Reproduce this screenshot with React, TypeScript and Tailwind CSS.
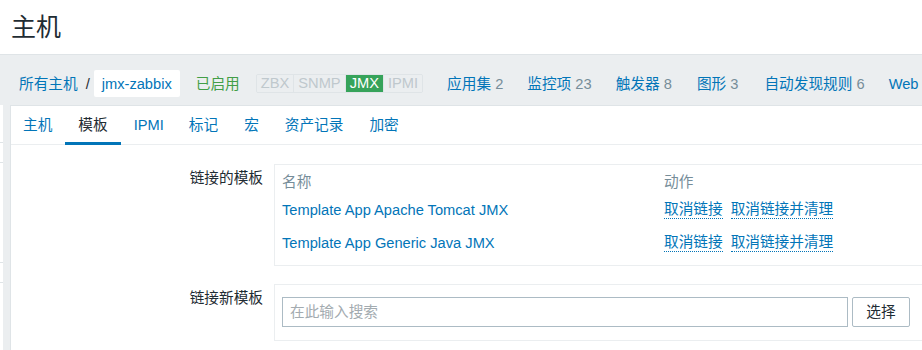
const font = { fontFamily: '"Liberation Sans", "Noto Sans CJK SC", sans-serif' };

const navLinks = [
  { label: "应用集", count: 2, ml: "ml-0" },
  { label: "监控项", count: 23, ml: "ml-[24px]" },
  { label: "触发器", count: 8, ml: "ml-[24px]" },
  { label: "图形", count: 3, ml: "ml-[25px]" },
  { label: "自动发现规则", count: 6, ml: "ml-[26px]" },
  { label: "Web 场景", count: 1, ml: "ml-[24px]" },
];

const tabs = ["主机", "模板", "IPMI", "标记", "宏", "资产记录", "加密"];

const linked = ["Template App Apache Tomcat JMX", "Template App Generic Java JMX"];

function Badges() {
  const items = [
    { name: "ZBX", on: false },
    { name: "SNMP", on: false },
    { name: "JMX", on: true },
    { name: "IPMI", on: false },
  ];
  return (
    <div className="flex h-[19px] overflow-hidden rounded-[2px] border border-[#dfe4e7]">
      {items.map((b, i) => (
        <span
          key={b.name}
          className={`flex items-center px-[4px] leading-none ${i > 0 ? "border-l border-[#dfe4e7]" : ""} ${
            b.on ? "bg-[#36a35a] text-white" : "bg-[#ebeef0] text-[#bfc8cd]"
          }`}
        >
          {b.name}
        </span>
      ))}
    </div>
  );
}

export default function App() {
  return (
    <div className="w-[922px] h-[350px] overflow-hidden bg-[#ebeef0] text-[14.67px] text-[#1f2c33]" style={font}>
      {/* page title */}
      <div className="h-[55px] bg-white border-b border-[#dfe4e7] pl-[11px] flex items-center">
        <h1 className="text-[25px] leading-none pt-[1px]">主机</h1>
      </div>

      {/* host navigation */}
      <div className="h-[50px] pt-[15px] pl-[19px] flex items-start whitespace-nowrap">
        <div className="h-[27px] flex items-center">
          <span className="text-[#0275b8]">所有主机</span>
          <span className="ml-[8px] mr-[4px]">/</span>
          <span className="h-[27px] flex items-center bg-white rounded-[2px] px-[8px] text-[#0275b8]">jmx-zabbix</span>
          <span className="ml-[16px] text-[#429e47]">已启用</span>
          <div className="ml-[16px]">
            <Badges />
          </div>
          <div className="ml-[24px] flex">
            {navLinks.map((n) => (
              <span key={n.label} className={n.ml}>
                <span className="text-[#0275b8]">{n.label}</span>
                <span className="text-[#768d99]"> {n.count}</span>
              </span>
            ))}
          </div>
        </div>
      </div>

      <div className="flex h-[245px]">
        {/* edge of the list behind */}
        <div className="w-[3px] shrink-0 bg-white flex flex-col">
          <div className="h-[38px] border-b border-[#dfe4e7]" />
          <div className="h-[20px] border-b border-[#dfe4e7]" />
          <div className="h-[100px] border-b border-[#dfe4e7]" />
          <div className="h-[20px] border-b border-[#dfe4e7]" />
        </div>

        {/* host form panel */}
        <div className="ml-[7px] w-[960px] shrink-0 bg-white border-t border-l border-[#dfe4e7]">
          <div className="h-[39px] flex border-b border-[#ebeef0]">
            {tabs.map((t, i) => (
              <div
                key={t}
                className={`relative h-full flex items-center ${i === 0 ? "pl-[12px]" : "pl-[13px]"} ${
                  i === 2 ? "pr-[12px]" : "pr-[13px]"
                } ${i === 1 ? "text-[#1f2c33]" : "text-[#0275b8]"}`}
              >
                {t}
                {i === 1 && <div className="absolute left-0 right-0 bottom-[-1px] h-[3px] bg-[#0275b8]" />}
              </div>
            ))}
          </div>

          <div className="pt-[19px]">
            {/* linked templates */}
            <div className="flex">
              <div className="w-[252px] text-right pt-[4px] leading-[20px]">链接的模板</div>
              <div className="ml-[11px] w-[680px] border border-[#ebeef0] px-[7px] pt-[5px] pb-[5px]">
                <div className="grid grid-cols-[382px_1fr] h-[24px] items-center text-[#768d99]">
                  <span>名称</span>
                  <span>动作</span>
                </div>
                {linked.map((name, i) => (
                  <div
                    key={name}
                    className={`grid grid-cols-[382px_1fr] items-center ${i === 0 ? "h-[31px]" : "h-[35px]"}`}
                  >
                    <span className="text-[#0275b8]">{name}</span>
                    <div className="flex gap-[8px] text-[#0275b8]">
                      <span className="leading-[18px] border-b border-dotted border-[#0275b8]">取消链接</span>
                      <span className="leading-[18px] border-b border-dotted border-[#0275b8]">取消链接并清理</span>
                    </div>
                  </div>
                ))}
              </div>
            </div>

            {/* link new template */}
            <div className="flex mt-[18px]">
              <div className="w-[252px] text-right pt-[4px] leading-[20px]">链接新模板</div>
              <div className="ml-[11px] w-[680px] border border-[#ebeef0] px-[7px] pt-[12px] pb-[13px] flex gap-[4px]">
                <div className="w-[566px] h-[30px] border border-[#acbbc4] flex items-center pl-[7px] text-[#a3abb0]">
                  在此输入搜索
                </div>
                <button className="w-[58px] h-[30px] border border-[#acbbc4] rounded-[2px] bg-white text-[#1f2c33]">
                  选择
                </button>
              </div>
            </div>
          </div>
        </div>
      </div>
    </div>
  );
}
